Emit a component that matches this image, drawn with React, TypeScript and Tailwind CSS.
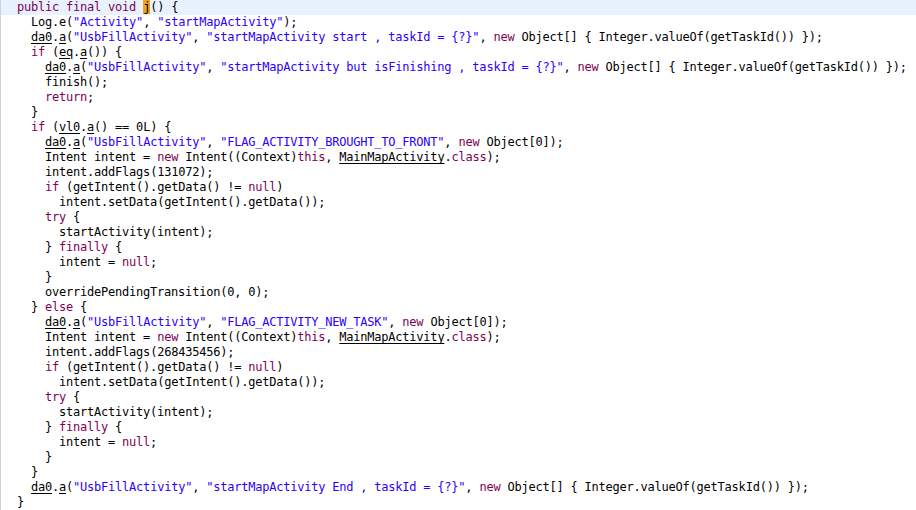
import React from "react";

const KEYWORDS = new Set([
  "public", "final", "void", "if", "new", "return", "try", "finally", "else", "null", "this", "class",
]);

const LINES: string[] = [
  "__FIRST__",
  "  Log.e(\"Activity\", \"startMapActivity\");",
  "  ~da0~.~a~(\"UsbFillActivity\", \"startMapActivity start , taskId = {?}\", new Object[] { Integer.valueOf(getTaskId()) });",
  "  if (~eq~.~a~()) {",
  "    ~da0~.~a~(\"UsbFillActivity\", \"startMapActivity but isFinishing , taskId = {?}\", new Object[] { Integer.valueOf(getTaskId()) });",
  "    finish();",
  "    return;",
  "  }",
  "  if (~vl0~.~a~() == 0L) {",
  "    ~da0~.~a~(\"UsbFillActivity\", \"FLAG_ACTIVITY_BROUGHT_TO_FRONT\", new Object[0]);",
  "    Intent intent = new Intent((Context)this, ~MainMapActivity~.class);",
  "    intent.addFlags(131072);",
  "    if (getIntent().getData() != null)",
  "      intent.setData(getIntent().getData());",
  "    try {",
  "      startActivity(intent);",
  "    } finally {",
  "      intent = null;",
  "    }",
  "    overridePendingTransition(0, 0);",
  "  } else {",
  "    ~da0~.~a~(\"UsbFillActivity\", \"FLAG_ACTIVITY_NEW_TASK\", new Object[0]);",
  "    Intent intent = new Intent((Context)this, ~MainMapActivity~.class);",
  "    intent.addFlags(268435456);",
  "    if (getIntent().getData() != null)",
  "      intent.setData(getIntent().getData());",
  "    try {",
  "      startActivity(intent);",
  "    } finally {",
  "      intent = null;",
  "    }",
  "  }",
  "  ~da0~.~a~(\"UsbFillActivity\", \"startMapActivity End , taskId = {?}\", new Object[] { Integer.valueOf(getTaskId()) });",
  "}",
];

function renderLine(line: string): React.ReactNode[] {
  const out: React.ReactNode[] = [];
  const re = /("[^"]*")|(~[^~]+~)|([A-Za-z_]\w*)|([^"~A-Za-z_]+)/g;
  let m: RegExpExecArray | null;
  let i = 0;
  while ((m = re.exec(line)) !== null) {
    if (m[1]) {
      out.push(
        <span key={i++} className="text-[#2a00ff]">
          {m[1]}
        </span>
      );
    } else if (m[2]) {
      out.push(
        <span key={i++} className="underline decoration-1 underline-offset-2">
          {m[2].slice(1, -1)}
        </span>
      );
    } else if (m[3]) {
      if (KEYWORDS.has(m[3])) {
        out.push(
          <span key={i++} className="text-[#7f0055]">
            {m[3]}
          </span>
        );
      } else {
        out.push(<span key={i++}>{m[3]}</span>);
      }
    } else if (m[4]) {
      out.push(<span key={i++}>{m[4]}</span>);
    }
  }
  return out;
}

export default function App() {
  return (
    <div className="w-[916px] h-[510px] bg-white overflow-hidden flex">
      <div className="w-px h-full bg-[#d2d2d2] shrink-0" />
      <div
        className="flex-1 flex flex-col text-[12px] text-black tracking-[-0.22px]"
        style={{ fontFamily: '"DejaVu Sans Mono", "Liberation Mono", monospace' }}
      >
        {LINES.map((line, idx) =>
          idx === 0 ? (
            <div key={idx} className="h-[15px] leading-[15px] whitespace-pre pl-[16px] bg-[#e8f2fe]">
              <span className="text-[#7f0055]">public</span> <span className="text-[#7f0055]">final</span>{" "}
              <span className="text-[#7f0055]">void</span> <span className="bg-[#f0a020]">j</span>() {"{"}
            </div>
          ) : (
            <div key={idx} className="h-[15px] leading-[15px] whitespace-pre pl-[16px]">
              {renderLine(line)}
            </div>
          )
        )}
      </div>
    </div>
  );
}
